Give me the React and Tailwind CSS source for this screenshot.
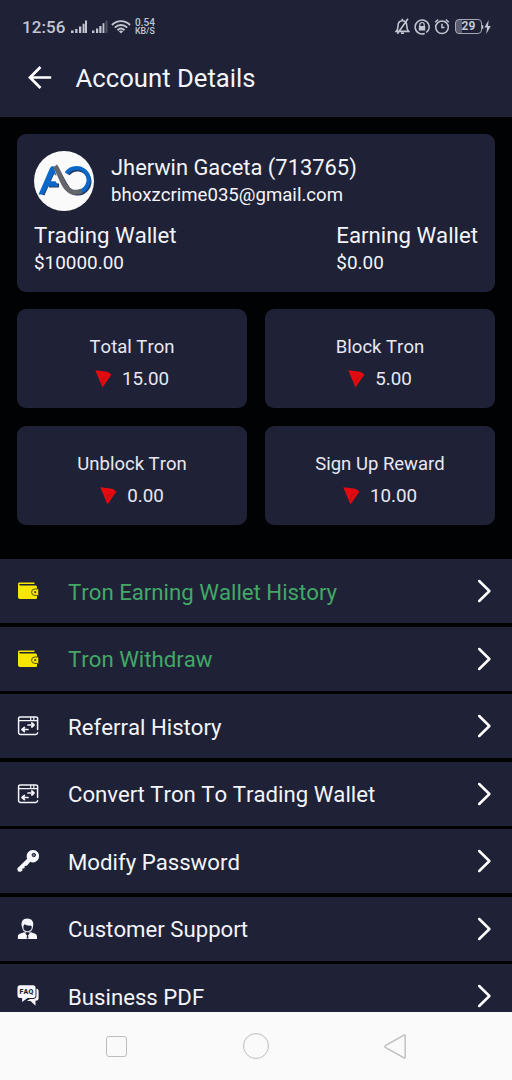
import React from "react";

const tiles = [
	{ label: "Total Tron", value: "15.00" },
	{ label: "Block Tron", value: "5.00" },
	{ label: "Unblock Tron", value: "0.00" },
	{ label: "Sign Up Reward", value: "10.00" },
];

const menu = [
	{ label: "Tron Earning Wallet History", Icon: WalletIcon, green: true },
	{ label: "Tron Withdraw", Icon: WalletIcon, green: true },
	{ label: "Referral History", Icon: TransferIcon },
	{ label: "Convert Tron To Trading Wallet", Icon: TransferIcon },
	{ label: "Modify Password", Icon: KeyIcon },
	{ label: "Customer Support", Icon: SupportIcon },
	{ label: "Business PDF", Icon: FaqIcon },
];

function WalletIcon() {
	return (
		<svg viewBox="0 0 22 22" className="h-[22px] w-[22px]">
			<path
				d="M17.5 3.6V2.5H2.8C1.5 2.5 1 3.2 1 4.2V16.8C1 18.2 1.7 19 3 19H18.3C19.6 19 20 18.4 20 17.4V7.3C20 6 19.4 5.4 18.2 5.4H3C2 5.4 1.8 4.2 3 4.1H17.5Z"
				fill="#f7e600"
			/>
			<path
				d="M21.5 9H17.8A3.2 3.2 0 0 0 17.8 15.4H21.5Z"
				fill="#f7e600"
				stroke="#55511f"
				strokeWidth="1"
			/>
			<circle cx="18.2" cy="12.2" r="1.1" fill="#55511f" />
		</svg>
	);
}

function TransferIcon() {
	return (
		<svg
			viewBox="0 0 22 22"
			className="h-[22px] w-[22px]"
			fill="none"
			stroke="#f4f4fa"
			strokeWidth="1.5"
			strokeLinecap="round"
			strokeLinejoin="round"
		>
			<path d="M20.6 14.5V3.5A1.6 1.6 0 0 0 19 1.9H3.2A1.6 1.6 0 0 0 1.6 3.5V17.6A2 2 0 0 0 3.6 19.6H18.6A2 2 0 0 0 20.6 17.8" />
			<path d="M1.8 5.6H20M13.7 2.2V4.7M16.8 2.2V4.7" strokeWidth="1.2" />
			<path d="M11 10H16.6M14.8 8L17 10L14.8 12M11 14.5H5.4M7.4 12.5L5 14.5L7.4 16.5" strokeWidth="1.7" />
		</svg>
	);
}

function KeyIcon() {
	return (
		<svg viewBox="0 0 22 22" className="h-[22px] w-[22px]">
			<path
				d="M15.8 0A6.2 6.2 0 0 0 10.2 8.7L0.2 18.6L1 21.4L3.8 21.8L5.4 20.4V18.4L7.5 18.3L7.7 15.9L9.8 15.8L13.3 11.8A6.2 6.2 0 1 0 15.8 0Z"
				fill="#f8f8fd"
			/>
			<circle cx="16.8" cy="5" r="1.7" fill="#77798a" stroke="#1f2236" strokeWidth="1" />
		</svg>
	);
}

function SupportIcon() {
	return (
		<svg viewBox="0 0 22 22" className="h-[22px] w-[22px]">
			<path
				d="M5 9C3.4 3.8 6 0.5 10.2 .5C15 .5 17.4 4 15.9 9L15 11C15.2 9.2 14.8 8.2 13.6 7.6C11 7.8 8.8 7 7.6 6.2C6.5 7.2 6.1 8.8 6.3 10.6Z"
				fill="#f4f4fa"
			/>
			<path
				d="M5.6 8.6C6 15.4 14.9 15.4 15.4 8.6M8.2 13V15.5M12.9 13V15.5"
				fill="none"
				stroke="#d8d9e2"
				strokeWidth="1.1"
			/>
			<path
				d="M.9 21V18.4C.9 16.1 2.9 15.5 7.2 14.2L10.5 18L13.9 14.2C18.2 15.5 20 16.1 20 18.4V21Z"
				fill="#f8f8fd"
			/>
			<path d="M9.8 15.6H11.3L11 17L11.5 20.5H9.6L10.1 17Z" fill="#1f2236" />
		</svg>
	);
}

function FaqIcon() {
	return (
		<svg viewBox="0 0 22 22" className="h-[22px] w-[22px]">
			<path
				d="M19.4 3.6C21 4 21.6 4.8 21.6 6.2V13.3C21.6 15 20.5 15.8 18.5 15.8V20.7L13.5 16.1H9.8L13 13.9H16.4C18.5 13.9 19.4 12.6 19.4 10.8Z"
				fill="#f4f4fa"
			/>
			<path
				d="M3 0.3H16C17.8 0.3 18.5 1.2 18.5 2.8V10.5C18.5 12.3 17.6 13 16 13H10.5L5.1 17V13H3C1.2 13 .5 12 .5 10.5V2.8C.5 1.2 1.3 .3 3 .3Z"
				fill="#f8f8fd"
			/>
			<text
				x="9.5"
				y="9.1"
				textAnchor="middle"
				fill="#1f2236"
				fontFamily="Roboto, sans-serif"
				fontWeight="900"
				fontSize="7"
				letterSpacing="0.2"
			>
				FAQ
			</text>
		</svg>
	);
}

function TronIcon() {
	return (
		<svg viewBox="0 0 17 19" className="h-[19px] w-[17px] shrink-0">
			<path d="M.3 .2L12.3 1.8L16.4 4.4L7.5 17.4Z" fill="#e30b0f" />
			<path d="M7.2 9L11.8 6.6M8 9.2L7.3 13.4" stroke="#a80c18" strokeWidth=".7" />
		</svg>
	);
}

function Logo() {
	return (
		<svg viewBox="0 0 60 60" className="h-[60px] w-[60px] shrink-0">
			<circle cx="30" cy="30" r="30" fill="#fafafa" />
			<g fill="none" stroke="#26375e" strokeWidth="4" transform="translate(1 1.6)">
				<path d="M7.5 42L18 19M14 33H24" />
				<path d="M33 21.5A12 12 0 1 1 41 40.8C33 40.5 30 30 22 17" />
			</g>
			<path d="M4.5 43.5L16 17Q17 15 19.5 15L22.5 25L19.6 22.5L16.2 30.2H21.5L25 35.4H14L10.3 42Q9.5 43.5 8 43.5Z" fill="#0c68c8" />
			<path
				d="M32.5 22.5A12 12 0 1 1 43 41"
				fill="none"
				stroke="#0c68c8"
				strokeWidth="4.2"
			/>
			<path
				d="M21 15C27 23 29 39 39 41.2C42.5 41.8 45 41 47.5 40"
				fill="none"
				stroke="#63656b"
				strokeWidth="5"
			/>
		</svg>
	);
}

function StatusBar() {
	return (
		<div className="flex h-[53px] items-center justify-between pr-[21px] pl-[22px] text-[#c3c5d1]">
			<div className="flex items-center">
				<span className="w-[48px] text-[17px] leading-5 font-medium tracking-[0.1px]">12:56</span>
				<svg viewBox="0 0 38 14" className="h-[14px] w-[38px]" fill="currentColor">
					<path d="M1 10.5h2.6V13H1zM5.2 9h2.3v4H5.2zM9 6.5h2.3V13H9zM12.6 3.7h2V13h-2zM15 .5h2V13h-2z" />
					<path d="M22 10.5h2.4V13H22zM26 8.5h2.2V13H26zM29.3 6h2.2v7h-2.2z" />
					<path d="M32.6 3.2h1.8V13h-1.8z" />
					<path d="M35.5 .5h2V13h-2z" opacity=".3" />
				</svg>
				<svg
					viewBox="0 0 20 14"
					className="ml-[3px] h-[14px] w-[20px]"
					fill="none"
					stroke="currentColor"
					strokeWidth="1.9"
				>
					<path d="M1 5C6 -.2 14 -.2 19 5M3.8 7.7C7.5 4 12.5 4 16.2 7.7M6.5 10.2C8.7 8.2 11.3 8.2 13.5 10.2" />
					<path d="M7.8 11.3C9.1 10.3 10.9 10.3 12.2 11.3L10 13.5Z" fill="currentColor" stroke="none" />
				</svg>
				<div className="ml-[4px] text-[10px] leading-[9px] font-medium">
					<p>0.54</p>
					<p className="text-[8.8px]">KB/S</p>
				</div>
			</div>
			<div className="flex items-center">
				<svg
					viewBox="0 0 15 17"
					className="h-[17px] w-[15px]"
					fill="none"
					stroke="currentColor"
					strokeWidth="1.6"
				>
					<path d="M1.2 13.4C2.7 12 3 10.5 3 8C3 4.4 4.7 2.7 7.4 2.7S11.8 4.4 11.8 8C11.8 10.5 12.2 12 13.6 13.4ZM7.4 .8V2.7M6 15.2H9M2.4 15.8L13 .8" />
				</svg>
				<svg
					viewBox="0 0 16 16"
					className="ml-[4px] h-[16px] w-[16px]"
					fill="none"
					stroke="currentColor"
					strokeWidth="1.5"
				>
					<path d="M10.7 14.5A7 7 0 1 1 14 11.8M12.2 13.5L14.6 11" />
					<path d="M5.8 7V5.7A2.2 2.2 0 0 1 10.2 5.7V7" strokeWidth="1.2" />
					<path d="M4.8 7H11.2V11.5H4.8Z" fill="currentColor" stroke="none" />
				</svg>
				<svg
					viewBox="0 0 16 17"
					className="ml-[4px] h-[17px] w-[16px]"
					fill="none"
					stroke="currentColor"
					strokeWidth="1.5"
				>
					<circle cx="8" cy="9.3" r="6.3" />
					<path d="M8 5.8V9.6H10.6M1.2 4.2L4.2 1.5M14.8 4.2L11.8 1.5" />
				</svg>
				<div className="ml-[5px] flex h-[15px] w-[27px] items-center justify-center rounded-[4px] border border-[#a5a7b5] bg-linear-to-r from-[#5b5e70] from-25% to-transparent to-25% text-[12px] leading-[13px] font-bold">
					29
				</div>
				<svg viewBox="0 0 9 14" className="h-[14px] w-[9px]" fill="currentColor">
					<path d="M0 5.2H1.3V8.8H0ZM6.6 0L2.5 7.6H5L4.3 14L8.8 6H6.1Z" />
				</svg>
			</div>
		</div>
	);
}

function NavBar() {
	return (
		<div className="flex h-[68px] shrink-0 items-center justify-between bg-[#fafafa] px-[106px] text-[#bdbdbd]">
			<div className="h-[21px] w-[21px] rounded-[3px] border-[1.5px] border-current" />
			<div className="h-[26px] w-[26px] rounded-full border-[1.5px] border-current" />
			<svg
				viewBox="0 0 22 25"
				className="h-[25px] w-[22px]"
				fill="none"
				stroke="currentColor"
				strokeWidth="1.4"
				strokeLinejoin="round"
			>
				<path d="M20 1.2Q21.2 .6 21.2 2V23Q21.2 24.4 20 23.8L1.3 13.3Q.2 12.5 1.3 11.7Z" />
			</svg>
		</div>
	);
}

function App() {
	return (
		<div className="flex h-[1080px] w-[512px] flex-col overflow-hidden bg-[#010204] font-[Roboto,sans-serif] text-[#f4f4fa] [font-kerning:none]">
			<header className="h-[117px] shrink-0 bg-[#1f2236]">
				<StatusBar />
				<div className="flex h-[50px] items-center pl-[28px]">
					<svg
						viewBox="0 0 24 24"
						className="h-[24px] w-[24px]"
						fill="none"
						stroke="#fff"
						strokeWidth="2.7"
					>
						<path d="M23.2 11.5H2.5M12.5 1L2 11.5L12.5 22" />
					</svg>
					<h1 className="ml-[23.5px] text-[25.7px] leading-8 whitespace-nowrap">
						Account Details
					</h1>
				</div>
			</header>

			<section className="mx-[17px] mt-[17px] h-[158px] shrink-0 rounded-[9px] bg-[#1f2236] px-[17px] pt-[17px]">
				<div className="flex h-[60px]">
					<Logo />
					<div className="ml-[17px] whitespace-nowrap">
						<p className="pt-[3px] text-[21.9px] leading-[28px]">Jherwin Gaceta (713765)</p>
						<p className="text-[18.6px] leading-[27px]">bhoxzcrime035@gmail.com</p>
					</div>
				</div>
				<div className="flex justify-between pt-[10px] whitespace-nowrap">
					<div>
						<p className="text-[22.2px] leading-[28px]">Trading Wallet</p>
						<p className="mt-px text-[18.9px] leading-[26px]">$10000.00</p>
					</div>
					<div>
						<p className="text-[22.2px] leading-[28px]">Earning Wallet</p>
						<p className="mt-px text-[18.9px] leading-[26px]">$0.00</p>
					</div>
				</div>
			</section>

			<section className="mx-[17px] mt-[17px] grid shrink-0 grid-cols-2 gap-x-[18px] gap-y-[18px]">
				{tiles.map((tile) => (
					<div
						key={tile.label}
						className="flex h-[99px] flex-col items-center rounded-[9px] bg-[#1f2236] pt-[22px] text-[18.5px] text-[#e8e8f2]"
					>
						<p className="leading-[32px]">{tile.label}</p>
						<div className="flex items-center gap-[10px] text-[18.8px] leading-[33px]">
							<TronIcon />
							<span>{tile.value}</span>
						</div>
					</div>
				))}
			</section>

			<nav className="mt-[34px] flex min-h-0 flex-1 flex-col gap-[3.5px] overflow-hidden">
				{menu.map(({ label, Icon, green }) => (
					<div
						key={label}
						className="flex h-[64px] shrink-0 items-center bg-[#1f2236] pr-[20px] pl-[17px]"
					>
						<Icon />
						<span
							className={`ml-[29px] flex-1 pt-px text-[22.2px] leading-7 whitespace-nowrap ${
								green ? "text-[#43a867]" : "text-[#f4f4fa]"
							}`}
						>
							{label}
						</span>
						<svg
							viewBox="0 0 16 24"
							className="h-[24px] w-[16px]"
							fill="none"
							stroke="#fff"
							strokeWidth="2.5"
							strokeLinecap="round"
							strokeLinejoin="round"
						>
							<path d="M3.2 2L13.4 12L3.2 22" />
						</svg>
					</div>
				))}
			</nav>
			<NavBar />
		</div>
	);
}

export default App;
